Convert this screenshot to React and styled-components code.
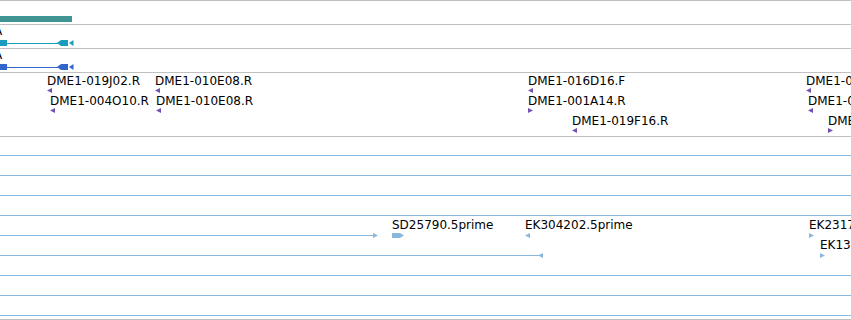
import React from "react";
import styled, { createGlobalStyle } from "styled-components";

const Global = createGlobalStyle`
  html, body { margin: 0; padding: 0; background: #fff; }
  body { font-family: "DejaVu Sans", "Liberation Sans", sans-serif; }
`;

const GRAY = "#c0c0c0";
const EST = "#8ab8dc";
const PURPLE = "#7352b2";

const Browser = styled.div`
  display: flex;
  flex-direction: column;
  width: 851px;
  height: 320px;
  overflow: hidden;
`;

const Track = styled.div`
  position: relative;
  flex: none;
  height: ${(p) => p.$h}px;
  border-top: 1px solid ${GRAY};
  border-bottom: ${(p) => (p.$last ? `1px solid ${GRAY}` : "none")};
  box-sizing: border-box;
  overflow: hidden;
`;

/* a feature on the track canvas: its label above, its glyph below */
const Feature = styled.div`
  position: absolute;
  left: ${(p) => p.$x}px;
  top: ${(p) => p.$y}px;
  display: flex;
  flex-direction: column;
  align-items: flex-start;
  gap: ${(p) => p.$gap ?? 1}px;
`;

const Label = styled.span`
  font-size: 12px;
  line-height: 12px;
  color: #000;
  white-space: nowrap;
  margin-left: ${(p) => p.$shift ?? 0}px;
`;

const Glyph = styled.svg`
  display: block;
  flex: none;
  overflow: visible;
`;

const Bar = styled.div`
  position: absolute;
  left: 0;
  top: ${(p) => p.$y}px;
  width: ${(p) => p.$w}px;
  height: ${(p) => p.$h}px;
  background: ${(p) => p.$c};
`;

const Rule = styled.div`
  position: absolute;
  left: 0;
  top: ${(p) => p.$y}px;
  width: ${(p) => p.$w}px;
  height: 1px;
  background: ${EST};
`;

const EndMark = styled.svg`
  position: absolute;
  right: -3px;
  top: -2px;
  display: block;
`;

/* page y -> offset inside a track whose top border sits at trackTop */
const rel = (pageY, trackTop) => pageY - trackTop - 1;

function GeneGlyph({ color }) {
  return (
    <Glyph width="74" height="6" viewBox="0 0 74 6">
      <rect x="0" y="0" width="7" height="6" fill={color} />
      <rect x="7" y="3" width="51" height="1" fill={color} />
      <polygon points="57,3 61,0 68,0 68,6 61,6" fill={color} />
      <polygon points="69,3 73.5,0 73.5,6" fill={color} />
    </Glyph>
  );
}

const tri = (dir) => (dir === "L" ? "0,2.5 5,0 5,5" : "0,0 5,2.5 0,5");

function Arrow({ dir, color }) {
  return (
    <Glyph width="5" height="5" viewBox="0 0 5 5">
      <polygon points={tri(dir)} fill={color} />
    </Glyph>
  );
}

function ThickArrow({ color }) {
  return (
    <Glyph width="12" height="5" viewBox="0 0 12 5">
      <polygon points="0,0 8,0 12,2.5 8,5 0,5" fill={color} />
    </Glyph>
  );
}

const clones = [
  { name: "DME1-019J02.R", x: 47, row: 0, dir: "L" },
  { name: "DME1-010E08.R", x: 155, row: 0, dir: "L" },
  { name: "DME1-016D16.F", x: 528, row: 0, dir: "L" },
  { name: "DME1-017K05.R", x: 806, row: 0, dir: "L" },
  { name: "DME1-004O10.R", x: 50, row: 1, dir: "L" },
  { name: "DME1-010E08.R", x: 156, row: 1, dir: "L" },
  { name: "DME1-001A14.R", x: 528, row: 1, dir: "R" },
  { name: "DME1-012C03.R", x: 808, row: 1, dir: "L" },
  { name: "DME1-019F16.R", x: 572, row: 2, dir: "L" },
  { name: "DME1-008B11.F", x: 828, row: 2, dir: "R" },
];

const estRows = [155, 175, 195, 215, 235, 255, 275, 295, 315];
const estEnds = {
  235: { w: 375, dir: "R" },
  255: { w: 540, dir: "L" },
};

const ests = [
  { name: "SD25790.5prime", x: 392, y: 235, thick: true },
  { name: "EK304202.5prime", x: 525, y: 235, dir: "L" },
  { name: "EK231702.5prime", x: 809, y: 235, dir: "R" },
  { name: "EK136614.5prime", x: 820, y: 255, dir: "R" },
];

export default function App() {
  return (
    <>
      <Global />
      <Browser>
        <Track $h={24}>
          <Bar $y={rel(16, 0)} $w={72} $h={6} $c="#409494" />
        </Track>
        <Track $h={24}>
          <Feature $x={0} $y={rel(25, 24)} $gap={3}>
            <Label $shift={-6}>A</Label>
            <GeneGlyph color="#1a9dbd" />
          </Feature>
        </Track>
        <Track $h={24}>
          <Feature $x={0} $y={rel(49, 48)} $gap={3}>
            <Label $shift={-6}>A</Label>
            <GeneGlyph color="#3366cc" />
          </Feature>
        </Track>
        <Track $h={64}>
          {clones.map((c, i) => (
            <Feature key={i} $x={c.x} $y={rel(75 + c.row * 20, 72)}>
              <Label>{c.name}</Label>
              <Arrow dir={c.dir} color={PURPLE} />
            </Feature>
          ))}
        </Track>
        <Track $h={184} $last>
          {estRows.map((y) => {
            const end = estEnds[y];
            return (
              <Rule key={y} $y={rel(y, 136)} $w={end ? end.w : 851}>
                {end && (
                  <EndMark width="5" height="5" viewBox="0 0 5 5">
                    <polygon points={tri(end.dir)} fill={EST} />
                  </EndMark>
                )}
              </Rule>
            );
          })}
          {ests.map((e, i) => (
            <Feature key={i} $x={e.x} $y={rel(e.y - 16, 136)} $gap={2}>
              <Label>{e.name}</Label>
              {e.thick ? <ThickArrow color={EST} /> : <Arrow dir={e.dir} color={EST} />}
            </Feature>
          ))}
        </Track>
      </Browser>
    </>
  );
}
